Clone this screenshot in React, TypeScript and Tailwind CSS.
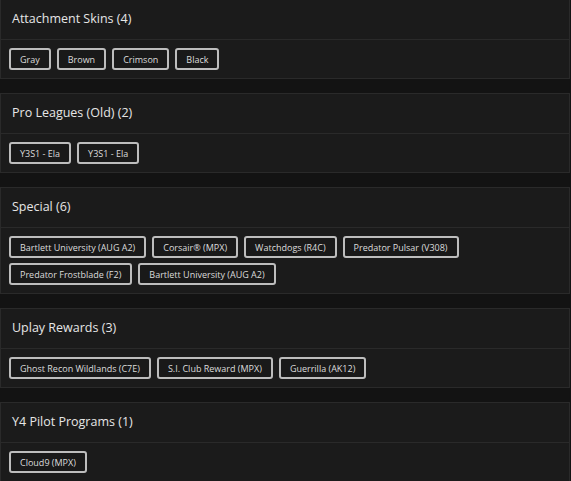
import React from 'react'

interface Section {
  title: string
  items: string[]
}

const sections: Section[] = [
  { title: 'Attachment Skins (4)', items: ['Gray', 'Brown', 'Crimson', 'Black'] },
  { title: 'Pro Leagues (Old) (2)', items: ['Y3S1 - Ela', 'Y3S1 - Ela'] },
  {
    title: 'Special (6)',
    items: [
      'Bartlett University (AUG A2)',
      'Corsair® (MPX)',
      'Watchdogs (R4C)',
      'Predator Pulsar (V308)',
      'Predator Frostblade (F2)',
      'Bartlett University (AUG A2)',
    ],
  },
  {
    title: 'Uplay Rewards (3)',
    items: ['Ghost Recon Wildlands (C7E)', 'S.I. Club Reward (MPX)', 'Guerrilla (AK12)'],
  },
  { title: 'Y4 Pilot Programs (1)', items: ['Cloud9 (MPX)'] },
]

function SkinGroup({ section }: { section: Section }) {
  return (
    <div className="bg-[#1b1b1b] border border-[#2a2a2a] first:border-t-0 mb-[14px]">
      {/* Header */}
      <div className="h-[40px] flex items-center px-[11px] border-b border-[#2a2a2a]">
        <h2 className="text-[12.5px] font-medium text-[#e6e6e6]">{section.title}</h2>
      </div>

      {/* Chips */}
      <div className="pt-[8px] pb-[8px] px-[8px] flex flex-wrap gap-x-[6px] gap-y-[5px]">
        {section.items.map((item, i) => (
          <button
            key={i}
            type="button"
            className="h-[22px] px-[9px] rounded-[3px] border-2 border-[#bdbdbd] bg-[#191919] text-[9px] font-medium text-[#dcdcdc] leading-none"
          >
            {item}
          </button>
        ))}
      </div>
    </div>
  )
}

export default function App() {
  return (
    <div className="min-h-screen bg-[#131313] w-[571px] pr-[1px]" style={{ fontFamily: '"Open Sans", "Noto Sans", sans-serif' }}>
      {sections.map((s) => (
        <SkinGroup key={s.title} section={s} />
      ))}
    </div>
  )
}
